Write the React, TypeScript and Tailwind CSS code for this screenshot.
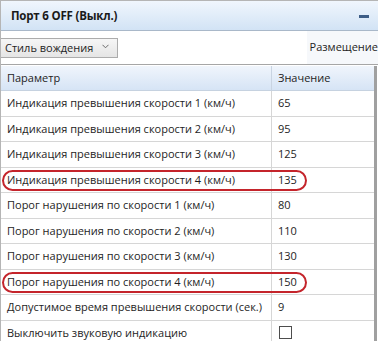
import React from "react";

const rows: { label: string; value?: string; mark?: boolean; check?: boolean }[] = [
  { label: "Индикация превышения скорости 1 (км/ч)", value: "65" },
  { label: "Индикация превышения скорости 2 (км/ч)", value: "95" },
  { label: "Индикация превышения скорости 3 (км/ч)", value: "125" },
  { label: "Индикация превышения скорости 4 (км/ч)", value: "135", mark: true },
  { label: "Порог нарушения по скорости 1 (км/ч)", value: "80" },
  { label: "Порог нарушения по скорости 2 (км/ч)", value: "110" },
  { label: "Порог нарушения по скорости 3 (км/ч)", value: "130" },
  { label: "Порог нарушения по скорости 4 (км/ч)", value: "150", mark: true },
  { label: "Допустимое время превышения скорости (сек.)", value: "9" },
  { label: "Выключить звуковую индикацию", check: true },
];

export default function App() {
  return (
    <div className="w-[378px] h-[341px] overflow-hidden bg-white text-[#1e1e1e] font-['Open_Sans','Noto_Sans',sans-serif] border-l border-t border-[#b5b5b5]">
      {/* title bar */}
      <div className="h-[30px] flex items-center justify-between pl-[10px] pr-[9px] bg-gradient-to-b from-[#f0f6fd] to-[#d2e3f5] border-b border-[#a9b8c9]">
        <span className="text-[11.5px] font-bold tracking-[-0.2px] text-[#1a1a1a]">Порт 6 OFF (Выкл.)</span>
        <span className="block w-[10px] h-[3px] bg-[#3d5d86] mt-[1px]" />
      </div>

      {/* toolbar */}
      <div className="h-[34px] flex items-center justify-between border-b border-[#a6a6a6]">
        <button className="h-[20px] w-[117px] flex items-center justify-between pl-[4px] pr-[8px] bg-gradient-to-b from-[#f6f6f6] to-[#e5e5e5] border border-[#acacac] border-l-0 text-[11px] leading-none">
          <span>Стиль вождения</span>
          <svg width="7" height="5" viewBox="0 0 7 5" className="mt-[-2px]">
            <path d="M0.5 0.8 L3.5 3.8 L6.5 0.8" fill="none" stroke="#6b6b6b" strokeWidth="1" />
          </svg>
        </button>
        <span className="self-stretch flex items-center pl-[3px] bg-[#f6f8fb] text-[11px]">Размещение</span>
      </div>

      {/* table */}
      <div className="w-[376px] border-r-[3px] border-[#a0a0a0] mt-[1px]">
        <div className="h-[25px] flex bg-gradient-to-b from-[#f0f5fc] to-[#d6e4f5] border-b border-[#c6d2e0] text-[11px]">
          <div className="w-[271px] flex items-center pl-[6px] border-r border-[#c9d4e2]">Параметр</div>
          <div className="flex-1 flex items-center pl-[6px]">Значение</div>
        </div>
        {rows.map((r) => (
          <div key={r.label} className="relative h-[25.5px] flex border-b border-[#d6d6d6] text-[11px]">
            <div className="w-[271px] flex items-center pl-[6px] border-r border-[#d6d6d6] whitespace-nowrap">{r.label}</div>
            <div className="flex-1 flex items-center pl-[6px]">
              {r.check ? (
                <span className="block w-[13px] h-[13px] border border-[#4d4d4d] bg-white ml-[1px]" />
              ) : (
                r.value
              )}
            </div>
            {r.mark && (
              <div className="absolute left-[1px] top-[2px] w-[305px] h-[21px] rounded-full border-2 border-[#c4242b] pointer-events-none" />
            )}
          </div>
        ))}
      </div>
    </div>
  );
}
